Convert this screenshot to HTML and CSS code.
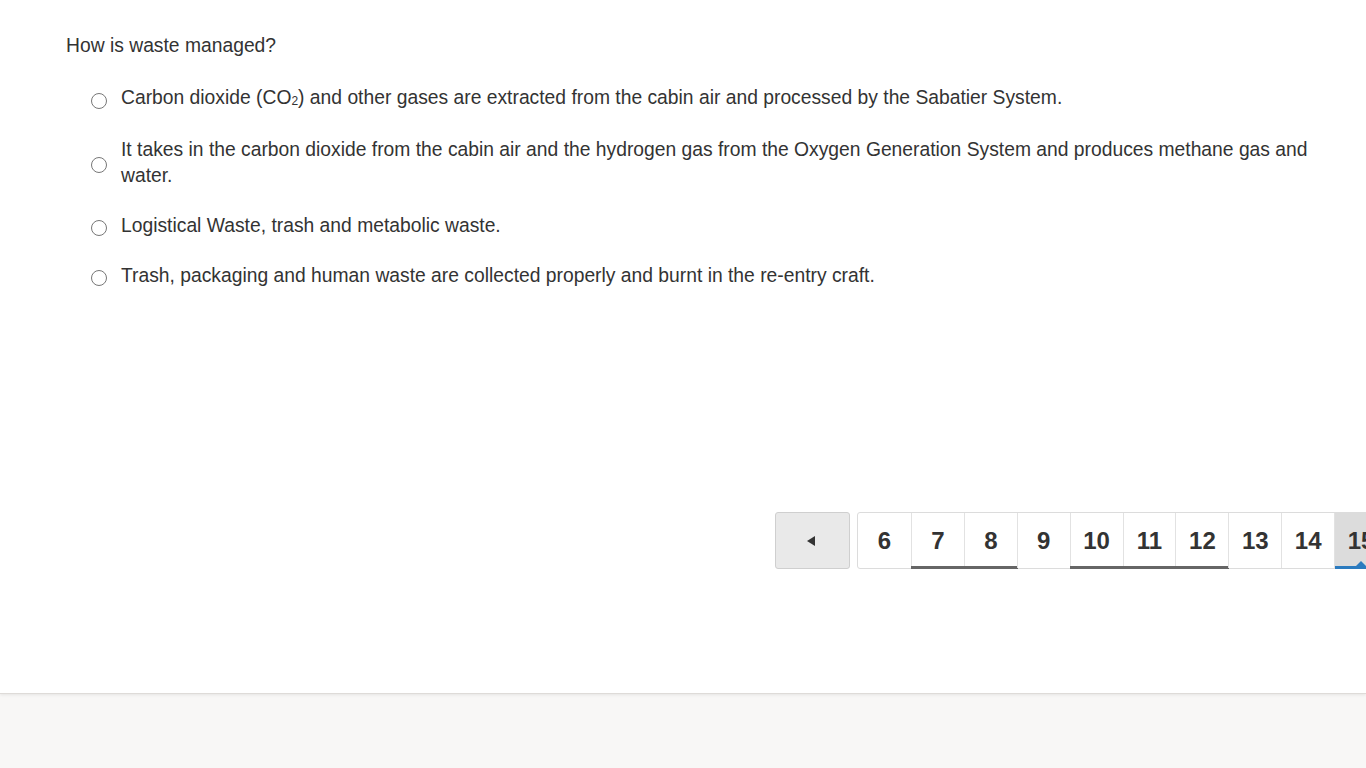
FILE: index.html
```html
<!DOCTYPE html>
<html>
<head>
<meta charset="utf-8">
<link rel="stylesheet" href="styles.css">
</head>
<body>
<div class="page">
  <main class="main">
    <p class="question">How is waste managed?</p>
    <ul class="options">
      <li class="option"><span class="radio"></span><span class="label">Carbon dioxide (CO<sub>2</sub>) and other gases are extracted from the cabin air and processed by the Sabatier System.</span></li>
      <li class="option"><span class="radio"></span><span class="label">It takes in the carbon dioxide from the cabin air and the hydrogen gas from the Oxygen Generation System and produces methane gas and water.</span></li>
      <li class="option"><span class="radio"></span><span class="label">Logistical Waste, trash and metabolic waste.</span></li>
      <li class="option"><span class="radio"></span><span class="label">Trash, packaging and human waste are collected properly and burnt in the re-entry craft.</span></li>
    </ul>
    <nav class="pager">
      <button class="prev"><span class="tri"></span></button>
      <div class="pages">
        <span class="pg">6</span>
        <span class="pg done">7</span>
        <span class="pg done">8</span>
        <span class="pg">9</span>
        <span class="pg done">10</span>
        <span class="pg done">11</span>
        <span class="pg done">12</span>
        <span class="pg">13</span>
        <span class="pg">14</span>
        <span class="pg current">15</span>
        <span class="pg">16</span>
      </div>
    </nav>
  </main>
  <footer class="footer"></footer>
</div>
</body>
</html>
```

FILE: styles.css
```css
html, body {
  margin: 0;
  padding: 0;
  overflow: hidden;
}
body {
  font-family: "Liberation Sans", Arial, sans-serif;
  color: #333;
  background: #f8f7f6;
}
.page {
  width: 1366px;
  height: 768px;
  overflow: hidden;
}
.main {
  background: #fff;
  height: 694px;
  box-sizing: border-box;
  padding: 34px 50px 0 66px;
  border-bottom: 1px solid #dedbd8;
  box-shadow: 0 1px 3px rgba(0,0,0,0.08);
  overflow: hidden;
}
.question {
  margin: 0;
  font-size: 19.3px;
  line-height: 24px;
}
.options {
  list-style: none;
  margin: 27px 0 0 0;
  padding: 0 0 0 25px;
}
.option {
  display: flex;
  align-items: center;
  font-size: 19.3px;
  line-height: 26px;
  margin-bottom: 24px;
}
.radio {
  flex: none;
  width: 16px;
  height: 16px;
  border: 1px solid #777;
  border-radius: 50%;
  margin-right: 14px;
  margin-top: 3px;
  box-sizing: border-box;
  background: #fff;
}
.label sub {
  font-size: 12px;
  vertical-align: baseline;
  position: relative;
  top: 1px;
}
.pager {
  display: flex;
  align-items: stretch;
  margin-top: 223px;
  margin-left: 709px;
  width: 1000px;
  height: 57px;
}
.prev {
  flex: none;
  width: 75px;
  height: 57px;
  background: #e9e9e9;
  border: 1px solid #cfcfcf;
  border-radius: 3px;
  margin-right: 7px;
  padding: 0;
  display: flex;
  align-items: center;
  justify-content: center;
}
.tri {
  width: 0;
  height: 0;
  border-top: 5px solid transparent;
  border-bottom: 5px solid transparent;
  border-right: 8px solid #333;
  margin-left: -3px;
}
.pages {
  display: flex;
  flex: none;
  border: 1px solid #dcdcdc;
  border-radius: 3px;
  height: 57px;
  box-sizing: border-box;
}
.pg {
  position: relative;
  box-sizing: border-box;
  width: 52.9px;
  display: flex;
  align-items: center;
  justify-content: center;
  font-weight: bold;
  font-size: 24px;
  color: #333;
  border-left: 1px solid #e2e2e2;
}
.pg:first-child {
  border-left: none;
  width: 53px;
}
.pg.done::after {
  content: "";
  position: absolute;
  left: -1px;
  right: -1px;
  bottom: -1px;
  height: 3px;
  background: #666;
}
.pg.current {
  background: #dcdcdc;
}
.pg.current::after {
  content: "";
  position: absolute;
  left: 0;
  right: 0;
  bottom: -1px;
  height: 3px;
  background: #2b7bbf;
}
.pg.current::before {
  content: "";
  position: absolute;
  left: 50%;
  margin-left: -5px;
  bottom: 2px;
  border-left: 5px solid transparent;
  border-right: 5px solid transparent;
  border-bottom: 5px solid #2b7bbf;
}
.footer {
  height: 74px;
}
```
